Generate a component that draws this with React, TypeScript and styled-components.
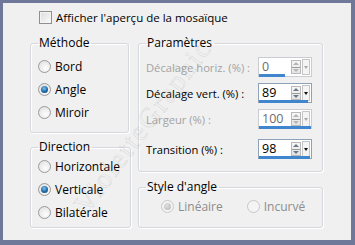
import styled, { createGlobalStyle } from "styled-components";

const GlobalStyle = createGlobalStyle`
  html, body {
    margin: 0;
    padding: 0;
    background: #70789a;
  }
  body {
    font-family: "Open Sans", "Noto Sans", sans-serif;
    font-size: 11.5px;
    color: #000;
  }
`;

const Dialog = styled.div`
  position: relative;
  width: 355px;
  height: 245px;
  box-sizing: border-box;
  border-style: solid;
  border-color: #70789a;
  border-width: 3px 4px 5px 3px;
  background: #f0f0f0;
  padding: 6px 0 0 27px;
  overflow: hidden;
`;

const TopRow = styled.label`
  display: flex;
  align-items: center;
  gap: 4px;
  height: 16px;
  padding-left: 9px;
`;

const CheckBox = styled.span`
  width: 13px;
  height: 13px;
  box-sizing: border-box;
  border: 1px solid #8e8f8f;
  background: linear-gradient(135deg, #dcdcdc, #fbfbfb);
  box-shadow: inset 0 0 0 1px #f4f4f4;
`;

const Columns = styled.div`
  display: flex;
  gap: 9px;
  margin-top: 10px;
`;

const Column = styled.div<{ $width: number; $gap: number }>`
  display: flex;
  flex-direction: column;
  width: ${({ $width }) => $width}px;
  gap: ${({ $gap }) => $gap}px;
`;

const Group = styled.fieldset<{ $height: number; $pt: number }>`
  margin: 0;
  box-sizing: border-box;
  height: ${({ $height }) => $height}px;
  border: 1px solid #d5d9dd;
  border-radius: 3px;
  box-shadow: inset 1px 1px 0 #fff, 1px 1px 0 #fff;
  padding: ${({ $pt }) => $pt}px 10px 0 7px;
`;

const Legend = styled.legend`
  padding: 0 2px 0 1px;
  line-height: 16px;
  height: 16px;
  font-size: 12px;
`;

const RadioRow = styled.div<{ $disabled?: boolean }>`
  display: flex;
  align-items: center;
  gap: 4px;
  height: 23px;
  font-size: 12px;
  color: ${({ $disabled }) => ($disabled ? "#8d8d8d" : "#000")};
`;

const RadioCircle = styled.span<{ $checked?: boolean; $disabled?: boolean }>`
  position: relative;
  width: 13px;
  height: 13px;
  box-sizing: border-box;
  border-radius: 50%;
  border: 1px solid ${({ $disabled }) => ($disabled ? "#c8c8c8" : "#9a9a9a")};
  background: ${({ $disabled }) =>
    $disabled
      ? "#f4f4f4"
      : "radial-gradient(circle at 60% 65%, #fdfdfd 0%, #e3e3e3 80%)"};
  &::after {
    content: "";
    display: ${({ $checked }) => ($checked ? "block" : "none")};
    position: absolute;
    left: 2px;
    top: 2px;
    width: 7px;
    height: 7px;
    border-radius: 50%;
    background: ${({ $disabled }) =>
      $disabled
        ? "radial-gradient(circle at 40% 35%, #e0e0e0, #b4b4b4)"
        : "radial-gradient(circle at 45% 35%, #7fc3ef 0%, #1e6aa6 55%, #0c3f6e 100%)"};
  }
`;

const RadioLine = styled.div`
  display: flex;
  align-items: center;
  gap: 24px;
  padding-left: 15px;
`;

const ParamRow = styled.div<{ $mt: number; $disabled?: boolean }>`
  display: flex;
  align-items: center;
  justify-content: space-between;
  height: 20px;
  margin-top: ${({ $mt }) => $mt}px;
  font-size: 11.2px;
  color: ${({ $disabled }) => ($disabled ? "#a3a3a3" : "#000")};
`;

const Spin = styled.div<{ $disabled?: boolean }>`
  position: relative;
  display: flex;
  align-items: center;
  width: 54px;
  height: 20px;
  box-sizing: border-box;
  border: 1px solid ${({ $disabled }) => ($disabled ? "#c9ccd1" : "#8ea3b9")};
  background: #fff;
  color: ${({ $disabled }) => ($disabled ? "#6d6d6d" : "#000")};
  font-size: 12.5px;
`;

const SpinValue = styled.span`
  flex: 1;
  padding-left: 3px;
  line-height: 16px;
`;

const Arrows = styled.div`
  display: flex;
  flex-direction: column;
  width: 10px;
  height: 14px;
  margin-right: 1px;
  border: 1px solid #b9b9b9;
  box-sizing: border-box;
  background: linear-gradient(#f7f7f7, #e4e4e4);
`;

const ArrowHalf = styled.div<{ $up?: boolean; $disabled?: boolean }>`
  flex: 1;
  display: flex;
  align-items: center;
  justify-content: center;
  border-top: ${({ $up }) => ($up ? "none" : "1px solid #9a9a9a")};
  &::before {
    content: "";
    border-left: 3px solid transparent;
    border-right: 3px solid transparent;
    ${({ $up, $disabled }) =>
      $up
        ? `border-bottom: 3px solid ${$disabled ? "#b5b5b5" : "#6b7a8a"};`
        : `border-top: 3px solid ${$disabled ? "#b5b5b5" : "#6b7a8a"};`}
  }
`;

const Drop = styled.div<{ $disabled?: boolean }>`
  display: flex;
  align-items: center;
  justify-content: center;
  width: 8px;
  height: 16px;
  margin-right: 1px;
  border: 1px solid #c6c6c6;
  box-sizing: border-box;
  background: #f4f4f4;
  &::before {
    content: "";
    border-left: 2.5px solid transparent;
    border-right: 2.5px solid transparent;
    border-top: 3px solid ${({ $disabled }) => ($disabled ? "#a8a8a8" : "#111")};
  }
`;

const Bar = styled.div`
  position: absolute;
  left: 0;
  bottom: -1px;
  height: 3px;
  background: #3f86cf;
`;

const Watermark = styled.div`
  position: absolute;
  left: 140px;
  top: 123px;
  transform: translate(-50%, -50%) rotate(-53deg);
  font-family: "Liberation Serif", serif;
  font-size: 28px;
  letter-spacing: 2px;
  color: transparent;
  -webkit-text-stroke: 0.6px rgba(120, 120, 120, 0.2);
  pointer-events: none;
  white-space: nowrap;
`;

type Param = {
  label: string;
  value: string;
  fill: number;
  disabled?: boolean;
  mt: number;
};

const params: Param[] = [
  { label: "Décalage horiz. (%) :", value: "0", fill: 0.5, disabled: true, mt: 0 },
  { label: "Décalage vert. (%) :", value: "89", fill: 0.95, mt: 6 },
  { label: "Largeur (%) :", value: "100", fill: 1, disabled: true, mt: 6 },
  { label: "Transition (%) :", value: "98", fill: 0.99, mt: 10 },
];

const Radio = ({
  label,
  checked,
  disabled,
}: {
  label: string;
  checked?: boolean;
  disabled?: boolean;
}) => (
  <RadioRow $disabled={disabled}>
    <RadioCircle $checked={checked} $disabled={disabled} />
    {label}
  </RadioRow>
);

export default function App() {
  return (
    <>
      <GlobalStyle />
      <Dialog>
        <TopRow>
          <CheckBox />
          Afficher l'aperçu de la mosaïque
        </TopRow>
        <Columns>
          <Column $width={99} $gap={6}>
            <Group $height={98} $pt={4}>
              <Legend>Méthode</Legend>
              <Radio label="Bord" />
              <Radio label="Angle" checked />
              <Radio label="Miroir" />
            </Group>
            <Group $height={89} $pt={0}>
              <Legend>Direction</Legend>
              <Radio label="Horizontale" />
              <Radio label="Verticale" checked />
              <Radio label="Bilatérale" />
            </Group>
          </Column>
          <Column $width={185} $gap={7}>
            <Group $height={137} $pt={6}>
              <Legend>Paramètres</Legend>
              {params.map((p) => (
                <ParamRow key={p.label} $mt={p.mt} $disabled={p.disabled}>
                  {p.label}
                  <Spin $disabled={p.disabled}>
                    <SpinValue>{p.value}</SpinValue>
                    <Arrows>
                      <ArrowHalf $up $disabled={p.disabled} />
                      <ArrowHalf $disabled={p.disabled} />
                    </Arrows>
                    <Drop $disabled={p.disabled} />
                    <Bar style={{ width: `${p.fill * 100}%` }} />
                  </Spin>
                </ParamRow>
              ))}
            </Group>
            <Group $height={49} $pt={0}>
              <Legend>Style d'angle</Legend>
              <RadioLine>
                <Radio label="Linéaire" checked disabled />
                <Radio label="Incurvé" disabled />
              </RadioLine>
            </Group>
          </Column>
        </Columns>
        <Watermark>VioletteGraphic</Watermark>
      </Dialog>
    </>
  );
}
